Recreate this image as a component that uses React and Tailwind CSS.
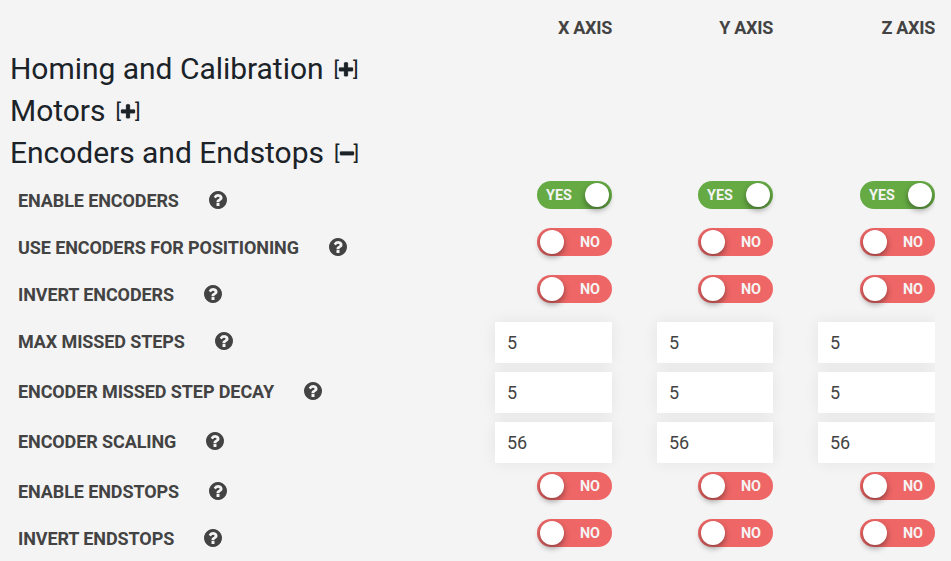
const HELP_PATH =
  "M1024 1376v-192q0-14-9-23t-23-9h-192q-14 0-23 9t-9 23v192q0 14 9 23t23 9h192q14 0 23-9t9-23zm256-672q0-88-55.5-163t-138.5-116-170-41q-243 0-371 213-15 24 8 42l132 100q7 6 19 6 16 0 25-12 53-68 86-92 34-24 86-24 48 0 85.5 26t37.5 59q0 38-20 61t-68 45q-63 28-115.5 86.5t-52.5 125.5v36q0 14 9 23t23 9h192q14 0 23-9t9-23q0-19 21.5-49.5t54.5-49.5q32-18 49-28.5t46-35 44.5-48 28-60.5 12.5-81zm384 192q0 209-103 385.5t-279.5 279.5-385.5 103-385.5-103-279.5-279.5-103-385.5 103-385.5 279.5-279.5 385.5-103 385.5 103 279.5 279.5 103 385.5z";
const PLUS_PATH =
  "M1408 736v192q0 40-28 68t-68 28h-416v416q0 40-28 68t-68 28h-192q-40 0-68-28t-28-68v-416h-416q-40 0-68-28t-28-68v-192q0-40 28-68t68-28h416v-416q0-40 28-68t68-28h192q40 0 68 28t28 68v416h416q40 0 68 28t28 68z";
const MINUS_PATH =
  "M1408 736v192q0 40-28 68t-68 28h-1216q-40 0-68-28t-28-68v-192q0-40 28-68t68-28h1216q40 0 68 28t28 68z";

const ROWS = [
  { label: "Enable encoders", on: true },
  { label: "Use encoders for positioning", on: false },
  { label: "Invert encoders", on: false },
  { label: "Max missed steps", value: "5" },
  { label: "Encoder missed step decay", value: "5" },
  { label: "Encoder scaling", value: "56" },
  { label: "Enable endstops", on: false },
  { label: "Invert endstops", on: false },
];

const AXES = [
  { name: "X", width: "w-[161px]" },
  { name: "Y", width: "w-[161px]" },
  { name: "Z", width: "w-[162px]" },
];

function Section({ title, open }) {
  return (
    <h2 className="flex h-[42px] items-center whitespace-pre text-[30px] leading-[42px] text-[#1b2329]">
      <span className="tracking-[-0.03px]">{title}</span>
      <span className="ml-[10px] flex items-center text-[21px]">
        <span>[</span>
        <svg viewBox="0 0 1408 1792" className="mt-px h-[18px] w-[14px] overflow-visible" fill="currentColor">
          <path d={open ? MINUS_PATH : PLUS_PATH} stroke="currentColor" strokeWidth="30" />
        </svg>
        <span>]</span>
      </span>
    </h2>
  );
}

function Toggle({ on }) {
  return (
    <button
      className={
        on
          ? "flex h-7 w-[75px] items-center justify-between rounded-full bg-[#66aa44] pl-[9px] pr-[3px]"
          : "flex h-7 w-[75px] flex-row-reverse items-center justify-between rounded-full bg-[#ee6666] pl-[3px] pr-3"
      }
    >
      <span className="pt-px text-[14.4px] font-bold leading-7 text-[#f4f4f4]">{on ? "YES" : "NO"}</span>
      <span className="size-6 rounded-full bg-white shadow-[0_3px_6px_rgba(0,0,0,0.4)]" />
    </button>
  );
}

function Row({ row }) {
  const numeric = row.value !== undefined;
  return (
    <div className={numeric ? "flex h-[50px]" : "flex h-[47px]"}>
      <div className="flex h-[38px] flex-1 items-center pl-2">
        <label className="text-[18px] font-bold uppercase tracking-[-0.1px] text-[#434343]">{row.label}</label>
        <svg viewBox="128 128 1536 1536" className="ml-[30px] size-[18px]" fill="#434343">
          <path d={HELP_PATH} />
        </svg>
      </div>
      {AXES.map((axis) => (
        <div key={axis.name} className={`flex justify-end ${axis.width}`}>
          {numeric ? (
            <input
              readOnly
              value={row.value}
              className={`h-[41px] bg-white px-3 text-[18px] text-[#434343] shadow-[0_0_15px_rgba(0,0,0,0.07)] outline-none ${axis.name === "Y" ? "w-[116px]" : "w-[117px]"}`}
            />
          ) : (
            <Toggle on={row.on} />
          )}
        </div>
      ))}
    </div>
  );
}

export default function App() {
  return (
    <main className="h-[561px] w-[951px] overflow-hidden bg-[#f4f4f4] pl-[10px] pr-4 font-[Roboto,sans-serif]">
      <div className="h-full overflow-x-clip">
        <header className="flex h-12 justify-end pt-[14px] text-[18px] font-bold leading-7 tracking-[-0.3px] text-[#434343]">
          {AXES.map((axis) => (
            <div key={axis.name} className={`text-right ${axis.width}`}>
              {axis.name} AXIS
            </div>
          ))}
        </header>
        <Section title="Homing and Calibration" />
        <Section title="Motors" />
        <Section title="Encoders and Endstops" open />
        <div className="pt-[7px]">
          {ROWS.map((row) => (
            <Row key={row.label} row={row} />
          ))}
        </div>
      </div>
    </main>
  );
}
